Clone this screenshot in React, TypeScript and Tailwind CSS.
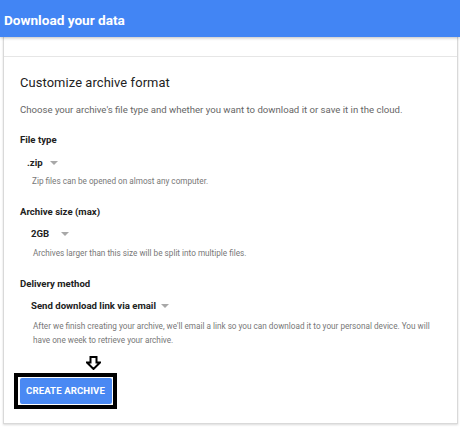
import React from "react";

const Caret = ({ ml }: { ml: string }) => (
  <svg width="8" height="4" viewBox="0 0 8 4" className={ml}>
    <path d="M0 0 L8 0 L4 4 Z" fill="#a8a8a8" />
  </svg>
);

export default function App() {
  return (
    <div
      className="w-[460px] h-[428px] bg-white overflow-hidden relative"
      style={{ fontFamily: "Roboto, 'Liberation Sans', Arial, sans-serif" }}
    >
      <div className="h-[37px] bg-[#4285f4] flex items-center pl-[4px] pt-[3px] shadow-[0_1px_3px_rgba(0,0,0,0.25)] relative z-10">
        <span className="text-white font-bold text-[13.6px]">Download your data</span>
      </div>
      <div className="ml-[3px] w-[455px] h-[387px] border-l border-r border-b border-[#d9d9d9] shadow-[0_1px_2px_rgba(0,0,0,0.15)]">
        <div className="h-[20px] border-b border-[#e6e6e6]" />
        <div className="pl-[16px] pt-[17px] flex flex-col items-start">
          <div className="text-[12.9px] text-[#222] leading-[18px] tracking-[0.1px]">Customize archive format</div>
          <div className="mt-[11px] text-[9.6px] text-[#666] leading-[14px]">
            Choose your archive's file type and whether you want to download it or save it in the cloud.
          </div>

          <div className="mt-[16px] text-[9.6px] font-bold text-[#222] leading-[14px]">File type</div>
          <div className="mt-[9px] ml-[7px] flex items-center text-[9.6px] font-bold text-[#222] leading-[14px]">
            .zip
            <Caret ml="ml-[7px]" />
          </div>
          <div className="mt-[5px] ml-[12px] text-[8.2px] text-[#777] leading-[12px]">
            Zip files can be opened on almost any computer.
          </div>

          <div className="mt-[18px] text-[9.6px] font-bold text-[#222] leading-[14px]">Archive size (max)</div>
          <div className="mt-[8px] ml-[11px] flex items-center text-[9.6px] font-bold text-[#222] leading-[14px]">
            2GB
            <Caret ml="ml-[12px]" />
          </div>
          <div className="mt-[6px] ml-[13px] text-[8.2px] text-[#777] leading-[12px]">
            Archives larger than this size will be split into multiple files.
          </div>

          <div className="mt-[18px] text-[9.6px] font-bold text-[#222] leading-[14px]">Delivery method</div>
          <div className="mt-[8px] ml-[11px] flex items-center text-[9.6px] font-bold text-[#222] leading-[14px]">
            Send download link via email
            <Caret ml="ml-[5px]" />
          </div>
          <div className="mt-[6px] ml-[13px] w-[405px] text-[8.2px] text-[#777] leading-[14px]">
            After we finish creating your archive, we'll email a link so you can download it to your personal device. You will have one week to retrieve your archive.
          </div>

          <div className="ml-[66px] mt-[9px] h-[14px] flex">
            <svg width="15" height="14" viewBox="0 0 15 14">
              <path d="M4.5 1 H10.5 V6.5 H14 L7.5 13 L1 6.5 H4.5 Z" fill="white" stroke="black" strokeWidth="2" strokeLinejoin="miter" />
            </svg>
          </div>
          <div className="ml-[-6px] mt-[3px] w-[103px] h-[36px] border-[4px] border-black flex items-center justify-center">
            <div className="w-[92px] h-[26px] bg-[#4a89f3] rounded-[2px] flex items-center justify-center text-white font-bold text-[9.6px] tracking-[0.1px]">
              CREATE ARCHIVE
            </div>
          </div>
        </div>
      </div>
    </div>
  );
}
